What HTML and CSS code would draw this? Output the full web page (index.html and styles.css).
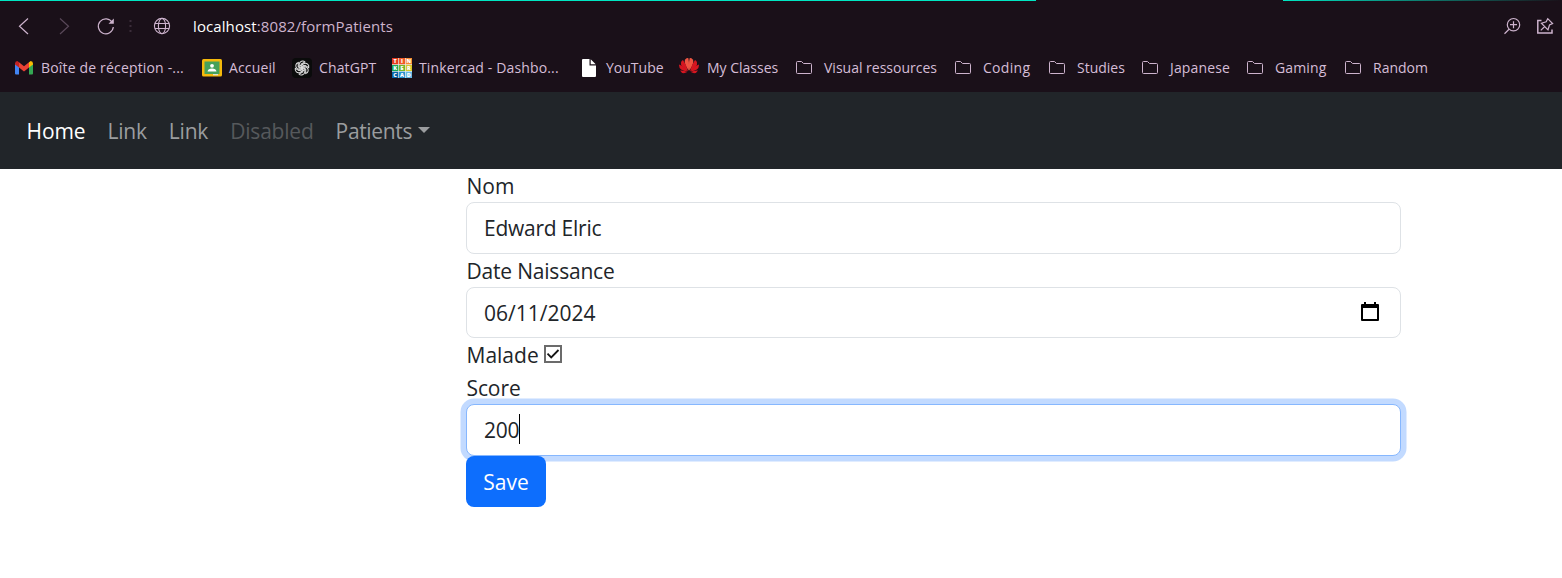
FILE: index.html
```html
<!DOCTYPE html>
<html lang="fr">
<head>
<meta charset="utf-8">
<title>formPatients</title>
<link rel="stylesheet" href="styles.css">
</head>
<body>
<svg width="0" height="0" class="defs"><defs>
<symbol id="folder" viewBox="0 0 16 14"><path d="M1.5 .5H5.5L7.5 2.5H14.5Q15.5 2.5 15.5 3.5V11.5Q15.5 12.5 14.5 12.5H1.5Q.5 12.5 .5 11.5V1.5Q.5 .5 1.5 .5Z" fill="none" stroke="#cdb3cd"/></symbol>
</defs></svg>
<header class="browser">
  <div class="accent"><i class="accent-left"></i><i class="accent-right"></i></div>
  <div class="toolbar">
    <svg class="tool-icons" width="180" height="50" viewBox="0 1 180 50" fill="none" stroke="#cdb3cd" stroke-width="1.2">
      <path d="M28 18.5L19.5 26.2L28 34"/>
      <path d="M60 18.5L68.5 26.2L60 34" stroke="#594859"/>
      <path d="M112.3 22.5A7.5 7.5 0 1 0 113.3 27"/><path d="M113.8 18.5V23.7H108.5Z" fill="#cdb3cd" stroke="none"/>
      <path d="M130.5 20v2M130.5 25v2M130.5 30v2" stroke="#3b2d3a" stroke-width="2"/>
      <g stroke-width="1.1"><circle cx="162" cy="26" r="7.6"/><ellipse cx="162" cy="26" rx="3.6" ry="7.6"/><path d="M155 23.5h14M155 28.5h14"/></g>
    </svg>
    <div class="url"><b>localhost</b>:8082/formPatients</div>
    <svg class="tool-right" width="62" height="50" viewBox="1500 1 62 50" fill="none" stroke="#cdb3cd" stroke-width="1.2">
      <circle cx="1513.5" cy="24.7" r="6.2"/><path d="M1510 24.7h7M1513.5 21.2v7M1509 29.3L1504.5 33.7"/>
      <path d="M1541.5 20.5H1537.8V33H1552V29.5" stroke-width="1.5"/>
      <path d="M1547.7 18.7L1552.6 23.6L1549.5 25L1548 29.8L1541.4 23.2L1546.2 21.8ZM1544.7 26.5L1540.8 30.4"/>
    </svg>
  </div>
  <nav class="bookmarks">
    <a class="bm"><svg width="18" height="14" viewBox="0 0 18 14"><path d="M0 2V12.5Q0 13.5 1 13.5H4V5Z" fill="#4285f4"/><path d="M18 2V12.5Q18 13.5 17 13.5H14V5Z" fill="#34a853"/><path d="M4 1.3L9 5.2L14 1.3V6.6L9 10.5L4 6.6Z" fill="#ea4335"/><path d="M0 2.5Q0 0 2.3 0L4 1.3V6.6L0 3.6Z" fill="#c5221f"/><path d="M18 2.5Q18 0 15.7 0L14 1.3V6.6L18 3.6Z" fill="#fbbc04"/></svg><span class="t1">Boîte de réception -...</span></a>
    <a class="bm"><svg width="20" height="18" viewBox="0 0 20 18"><rect width="20" height="17.5" rx="1.5" fill="#f5b90b"/><rect x="2.5" y="2.5" width="15" height="12.5" fill="#46a15a"/><circle cx="10" cy="6.8" r="1.9" fill="#fff"/><path d="M5.5 12.5Q6 9.5 10 9.5T14.5 12.5Z" fill="#fff"/><path d="M11 15h5v1.3h-5z" fill="#e0e0d0"/></svg><span class="t2">Accueil</span></a>
    <a class="bm"><svg width="20" height="20" viewBox="-10 -10 20 20"><rect x="-10" y="-10" width="20" height="20" rx="4" fill="#0a0b0b"/><g fill="none" stroke="#dedede" stroke-width="1.05"><path id="k" d="M-2.8 1.4V-4A3.4 3.4 0 0 1 3-6L-.8-3.9V1.9"/><use href="#k" transform="rotate(60)"/><use href="#k" transform="rotate(120)"/><use href="#k" transform="rotate(180)"/><use href="#k" transform="rotate(240)"/><use href="#k" transform="rotate(300)"/></g></svg><span class="t3">ChatGPT</span></a>
    <a class="bm"><svg width="20" height="20" viewBox="0 0 20 20"><path fill="#e9eee9" d="M0 0h20v20H0z"/><path fill="#e43d20" d="M0 0h6.3v6.3H0z"/><path fill="#f15a29" d="M7 0h6v6.3H7z"/><path fill="#f68b32" d="M13.7 0H20v6.3h-6.3z"/><path fill="#16a95b" d="M0 7h6.3v6H0z"/><path fill="#75b72b" d="M7 7h6v6H7z"/><path fill="#d7c72a" d="M13.7 7H20v6h-6.3z"/><path fill="#0865a7" d="M0 13.7h6.3V20H0z"/><path fill="#2790d0" d="M7 13.7h6V20H7z"/><path fill="#65b7e3" d="M13.7 13.7H20V20h-6.3z"/><g class="tile"><text x="3.1" y="5.3">T</text><text x="10" y="5.3">I</text><text x="16.8" y="5.3">N</text><text x="3.1" y="12.1">K</text><text x="10" y="12.1">E</text><text x="16.8" y="12.1">R</text><text x="3.1" y="19">C</text><text x="10" y="19">A</text><text x="16.8" y="19">D</text></g></svg><span class="t4">Tinkercad - Dashbo...</span></a>
    <a class="bm"><svg width="14" height="18" viewBox="0 0 14 18"><path d="M1 0H7.5V6.5H14V17Q14 18 13 18H1Q0 18 0 17V1Q0 0 1 0ZM8.7.3L13.7 5.3H8.7Z" fill="#fff"/></svg><span class="t5">YouTube</span></a>
    <a class="bm"><svg width="20" height="20" viewBox="0 0 20 20"><g fill="#d51620"><path d="M9.7 12.8Q4.3 5 6.2 1.5Q7.8-.2 9.4.2Q10.5 6 9.7 12.8Z" fill="#ee5542"/><path d="M10.3 12.8Q15.7 5 13.8 1.5Q12.2-.2 10.6.2Q9.5 6 10.3 12.8Z" fill="#ee5542"/><path d="M9 13.2Q1 8.5 2 4.4Q2.3 2.7 4 2Q7.5 6.8 9 13.2Z"/><path d="M11 13.2Q19 8.5 18 4.4Q17.7 2.7 16 2Q12.5 6.8 11 13.2Z"/><path d="M8.5 13.5Q-.7 12.7 .1 6.4Q5.5 8.5 8.5 13.5Z"/><path d="M11.5 13.5Q20.7 12.7 19.9 6.4Q14.5 8.5 11.5 13.5Z"/><path d="M8.2 14.1Q3.5 17 1 12.5Q5 12.2 8.2 14.1Z"/><path d="M11.8 14.1Q16.5 17 19 12.5Q15 12.2 11.8 14.1Z"/></g></svg><span class="t6">My Classes</span></a>
    <a class="bm"><svg width="16" height="14"><use href="#folder"/></svg><span>Visual ressources</span></a>
    <a class="bm"><svg width="16" height="14"><use href="#folder"/></svg><span class="t8">Coding</span></a>
    <a class="bm"><svg width="16" height="14"><use href="#folder"/></svg><span>Studies</span></a>
    <a class="bm"><svg width="16" height="14"><use href="#folder"/></svg><span class="t10">Japanese</span></a>
    <a class="bm"><svg width="16" height="14"><use href="#folder"/></svg><span class="t11">Gaming</span></a>
    <a class="bm"><svg width="16" height="14"><use href="#folder"/></svg><span>Random</span></a>
  </nav>
</header>
<nav class="navbar">
  <a class="active">Home</a><a>Link</a><a>Link</a><a class="disabled">Disabled</a><a class="patients">Patients<i class="caret"></i></a>
</nav>
<main class="form">
  <div class="label">Nom</div>
  <div class="control name">Edward Elric</div>
  <div class="label date-label">Date Naissance</div>
  <div class="control date"><span>06/11/2024</span><svg width="18" height="20" viewBox="0 0 18 20"><path d="M0 3Q0 2 1 2H3V0H5V2H13V0H15V2H17Q18 2 18 3V18Q18 19 17 19H1Q0 19 0 18ZM2 6V17H16V6Z" fill="#000" fill-rule="evenodd"/></svg></div>
  <div class="label check"><span>Malade</span><svg width="18" height="18" viewBox="0 0 18 18"><rect x="1" y="1" width="16" height="16" fill="#fff" stroke="#6b6b6b" stroke-width="2"/><path d="M3.5 8.7L7.2 12.4L14.5 5" fill="none" stroke="#151515" stroke-width="1.8"/></svg></div>
  <div class="label score">Score</div>
  <div class="control focus">200<i class="cursor"></i></div>
  <button class="save">Save</button>
</main>
</body>
</html>
```
FILE: styles.css
```css
*{box-sizing:border-box}
body{margin:0;height:578px;overflow:hidden;background:#fff;color:#212529;font-family:"Open Sans","Noto Sans",sans-serif;font-size:21px}
.defs{position:absolute}
.browser{height:92px;background:#1a1019}
.accent{display:flex;height:1px;justify-content:space-between}
.accent-left{width:1036px;background:#00e6c3}
.accent-right{width:279px;background:linear-gradient(90deg,#00e6c3,#1a1019)}
.toolbar{height:50px;display:flex;align-items:center}
.url{margin-left:13px;font-size:15px;letter-spacing:.1px;color:#cdb3cd}
.url b{font-weight:400;color:#fff}
.tool-right{margin-left:auto}
.bookmarks{height:34px;padding-left:15px;display:grid;grid-template-columns:187px 90px 100px 190px 97px 117px 159px 94px 93px 105px 98px 100px;font-size:14px;color:#d5bdd7}
.bm{display:flex;align-items:center;white-space:nowrap}
.bm span{margin-left:12px;padding-bottom:2px}
.bm .t1{margin-left:8px;letter-spacing:.17px}
.bm .t2,.bm .t3,.bm .t4{margin-left:7px;letter-spacing:.14px}
.bm .t5{margin-left:10px}
.bm .t6{margin-left:8px}
.bm .t8{letter-spacing:.3px}
.bm .t10,.bm .t11{letter-spacing:.15px}
.tile{font-size:5.5px;font-weight:800;fill:#fff;text-anchor:middle}
.navbar{height:77px;background:#212529;padding-left:26.5px;display:flex;align-items:center;color:#9b9d9f;letter-spacing:-.2px}
.navbar a{margin-right:22px}
.navbar .active{color:#fff;letter-spacing:-.1px}
.navbar .disabled{color:#56595c}
.navbar .patients{display:flex;align-items:center;letter-spacing:-.35px}
.caret{border:6px solid transparent;border-top-color:currentColor;border-bottom:0;margin:0 0 2px 6px}
.form{margin-left:466px;width:935px}
.label{height:33px;line-height:34px;padding-left:.5px}
.control{height:52px;border:1px solid #dee2e6;border-radius:8px;padding:0 17px;display:flex;align-items:center;background:#fff}
.name{letter-spacing:-.25px}
.date-label{letter-spacing:-.2px}
.score{letter-spacing:-.1px}
.date{height:51px;justify-content:space-between}
.date svg{margin:0 4px 2px 0}
.check{display:flex;align-items:center}
.check svg{margin:0 0 2px 5.5px}
.focus{border-color:#86b7fe;box-shadow:0 0 0 5.5px #c2daff;letter-spacing:-.2px}
.cursor{width:1px;height:30px;margin-bottom:2px;background:#000}
.save{position:relative;display:block;width:80px;height:51px;padding:0;border:0;border-radius:8px;background:#0d6efd;color:#fff;font:inherit}
```
